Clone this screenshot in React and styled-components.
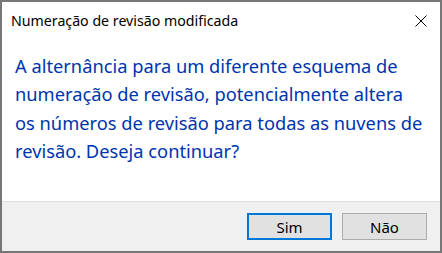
import React from "react";
import styled, { createGlobalStyle } from "styled-components";

const Global = createGlobalStyle`
  html, body { margin: 0; padding: 0; background: #ffffff; }
  * { box-sizing: border-box; }
`;

const Window = styled.div`
  width: 442px;
  height: 253px;
  border: 2px solid #777777;
  background: #ffffff;
  display: flex;
  flex-direction: column;
  font-family: "Noto Sans", "Open Sans", sans-serif;
`;

const TitleBar = styled.div`
  height: 38px;
  display: flex;
  align-items: center;
  justify-content: space-between;
  padding: 0 12px 0 9px;
`;

const Title = styled.div`
  font-size: 14.2px;
  color: #000000;
  margin-top: -1px;
`;

const CloseButton = styled.div`
  width: 14px;
  height: 14px;
  display: flex;
  align-items: center;
  justify-content: center;
`;

const Content = styled.div`
  flex: 1;
  padding: 12px 15px 0 13px;
`;

const Message = styled.p`
  margin: 0;
  font-size: 18.3px;
  line-height: 28.3px;
  color: #0034ad;
`;

const Footer = styled.div`
  height: 50px;
  border-top: 1px solid #dfdfdf;
  background: #f0f0f0;
  display: flex;
  align-items: center;
  justify-content: flex-end;
  gap: 10px;
  padding-right: 13px;
`;

const Button = styled.button`
  width: 85px;
  height: 27px;
  background: #e1e1e1;
  border: ${(p) => (p.$default ? "2px solid #0078d7" : "1px solid #adadad")};
  font-family: "Noto Sans", "Open Sans", sans-serif;
  font-size: 15px;
  color: #000000;
  padding: 0;
  margin: 0;
  display: flex;
  align-items: center;
  justify-content: center;
`;

export default function App() {
  return (
    <>
      <Global />
      <Window>
        <TitleBar>
          <Title>Numeração de revisão modificada</Title>
          <CloseButton>
            <svg width="12" height="12" viewBox="0 0 12 12">
              <path d="M0.5 0.5 L11.5 11.5 M11.5 0.5 L0.5 11.5" stroke="#000" strokeWidth="1" />
            </svg>
          </CloseButton>
        </TitleBar>
        <Content>
          <Message>
            A alternância para um diferente esquema de numeração de revisão,
            potencialmente altera os números de revisão para todas as nuvens de
            revisão. Deseja continuar?
          </Message>
        </Content>
        <Footer>
          <Button $default>Sim</Button>
          <Button>Não</Button>
        </Footer>
      </Window>
    </>
  );
}
